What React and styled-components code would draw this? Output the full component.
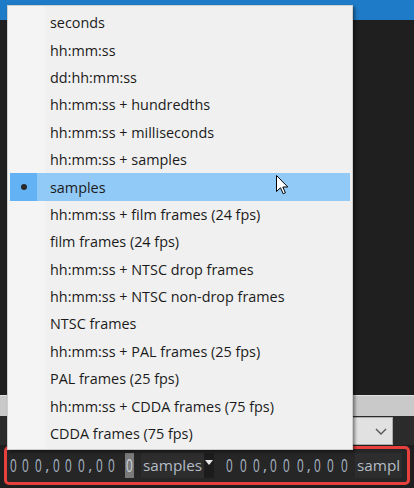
import React from 'react';
import styled, { createGlobalStyle } from 'styled-components';

const Global = createGlobalStyle`
  html, body { margin: 0; padding: 0; background: #1f1f1f; }
  body { width: 414px; height: 488px; overflow: hidden; font-family: "Open Sans", "Noto Sans", sans-serif; }
`;

const Screen = styled.div`
  position: relative;
  width: 414px;
  height: 488px;
  display: flex;
  flex-direction: column;
  background: #1f1f1f;
  overflow: hidden;
`;

const TitleBar = styled.div`
  flex: none;
  height: 20px;
  background: #1d7bc7;
`;

const Workspace = styled.div`
  flex: 1;
  background: #1f1f1f;
`;

const Band = styled.div`
  flex: none;
  height: 20px;
  background: #c9c9c9;
  border-top: 1px solid #e2e2e2;
`;

const ComboRow = styled.div`
  flex: none;
  height: 29px;
  box-sizing: border-box;
  padding: 1px 21px 0 0;
  display: flex;
  justify-content: flex-end;
  background: #2b2b2b;
`;

const Combo = styled.div`
  width: 130px;
  height: 28px;
  box-sizing: border-box;
  background: #e1e1e1;
  border: 1px solid #adadad;
  display: flex;
  align-items: center;
  justify-content: flex-end;
  padding-right: 4px;
`;

const Toolbar = styled.div`
  flex: none;
  margin: 1px 4px 3px;
  height: 39px;
  box-sizing: border-box;
  border: 3px solid #e8403d;
  border-radius: 5px;
  background: #262626;
  display: flex;
  align-items: center;
  overflow: hidden;
`;

const TimeControl = styled.div`
  display: flex;
  align-items: center;
  height: 25px;
  margin-left: ${p => p.$offset || 0}px;
`;

const Digit = styled.span`
  flex: none;
  width: ${p => p.$pitch}px;
  height: 25px;
  margin-left: ${p => p.$extra || 0}px;
  display: flex;
  align-items: center;
  justify-content: center;
`;

const Face = styled.span`
  width: 9px;
  height: 25px;
  display: flex;
  align-items: center;
  justify-content: center;
  background: ${p => (p.$focus ? '#7a7a7a' : 'transparent')};
  color: ${p => (p.$focus ? '#cdd5de' : '#a9b6c4')};
  font-size: 19px;
  line-height: 1;
`;

const Glyph = styled.span`
  display: inline-block;
  transform: scaleX(0.62);
`;

const Comma = styled.span`
  flex: none;
  width: ${p => p.$w}px;
  display: flex;
  justify-content: center;
  color: #a9b6c4;
  font-size: 16px;
  line-height: 25px;
`;

const Unit = styled.span`
  height: 25px;
  display: flex;
  align-items: center;
  padding: 0 2px;
  margin-left: ${p => p.$offset}px;
  background: #2d2d2d;
  color: #b4bcc6;
  font-size: 15.3px;
  line-height: 1;
  white-space: nowrap;
`;

const UnitArrow = styled.span`
  width: 10px;
  height: 25px;
  background: #1c1c1c;
  display: flex;
  justify-content: center;
  padding-top: 7px;
  box-sizing: border-box;
`;

const Menu = styled.div`
  position: absolute;
  left: 7px;
  top: 5px;
  width: 346px;
  box-sizing: border-box;
  padding: 3px 2px 2px;
  background: linear-gradient(to right, #f4f4f4 0 37px, #f0f0f0 37px);
  border: 1px solid #cfcfcf;
  box-shadow: 2px 2px 3px rgba(0, 0, 0, 0.45);
  z-index: 2;
`;

const Item = styled.div`
  height: 27.4px;
  display: flex;
  align-items: center;
  background: ${p => (p.$active ? '#91c9f7' : 'transparent')};
  color: #1b1b1b;
  font-size: 14.4px;
`;

const Check = styled.span`
  width: 27px;
  align-self: stretch;
  display: flex;
  align-items: center;
  justify-content: center;
  background: ${p => (p.$active ? '#62b2f4' : 'transparent')};
`;

const Dot = styled.span`
  width: 6px;
  height: 6px;
  border-radius: 50%;
  background: #2a2a2a;
`;

const Label = styled.span`
  padding-left: 13px;
  white-space: nowrap;
`;

const Cursor = styled.svg`
  position: absolute;
  left: 276px;
  top: 175px;
  z-index: 3;
`;

const items = [
  'seconds',
  'hh:mm:ss',
  'dd:hh:mm:ss',
  'hh:mm:ss + hundredths',
  'hh:mm:ss + milliseconds',
  'hh:mm:ss + samples',
  'samples',
  'hh:mm:ss + film frames (24 fps)',
  'film frames (24 fps)',
  'hh:mm:ss + NTSC drop frames',
  'hh:mm:ss + NTSC non-drop frames',
  'NTSC frames',
  'hh:mm:ss + PAL frames (25 fps)',
  'PAL frames (25 fps)',
  'hh:mm:ss + CDDA frames (75 fps)',
  'CDDA frames (75 fps)',
];

function Time({ focusLast, pitch, comma, offset }) {
  return (
    <TimeControl $offset={offset}>
      {[0, 1, 2].map(g => (
        <React.Fragment key={g}>
          {g > 0 && <Comma $w={comma}>,</Comma>}
          {[0, 1, 2].map(d => {
            const focus = focusLast && g === 2 && d === 2;
            return (
              <Digit key={d} $pitch={pitch} $extra={focus ? 5 : 0}>
                <Face $focus={focus}><Glyph>0</Glyph></Face>
              </Digit>
            );
          })}
        </React.Fragment>
      ))}
    </TimeControl>
  );
}

export default function App() {
  return (
    <>
      <Global />
      <Screen>
        <TitleBar />
        <Workspace />
        <Band />
        <ComboRow>
          <Combo>
            <svg width="14" height="9" viewBox="0 0 14 9">
              <path d="M2 2 L7 7 L12 2" fill="none" stroke="#555" strokeWidth="1.4" />
            </svg>
          </Combo>
        </ComboRow>
        <Toolbar>
          <Time focusLast pitch={12.5} comma={5.5} offset={0} />
          <Unit $offset={5.5}>samples</Unit>
          <UnitArrow>
            <svg width="8" height="5" viewBox="0 0 8 5">
              <path d="M0 0 H8 L4 5 Z" fill="#e6e6e6" />
            </svg>
          </UnitArrow>
          <Time pitch={13.3} comma={4} offset={9} />
          <Unit $offset={4.3}>sampl</Unit>
        </Toolbar>
        <Menu>
          {items.map(t => (
            <Item key={t} $active={t === 'samples'}>
              <Check $active={t === 'samples'}>{t === 'samples' && <Dot />}</Check>
              <Label>{t}</Label>
            </Item>
          ))}
        </Menu>
        <Cursor width="13" height="20" viewBox="0 0 13 20">
          <path d="M0.5 0.5 L0.5 16.5 L4.5 12.8 L7.2 18.8 L9.4 17.8 L6.8 12 L11.8 12 Z" fill="#fff" stroke="#000" strokeWidth="1" strokeLinejoin="miter" />
        </Cursor>
      </Screen>
    </>
  );
}
